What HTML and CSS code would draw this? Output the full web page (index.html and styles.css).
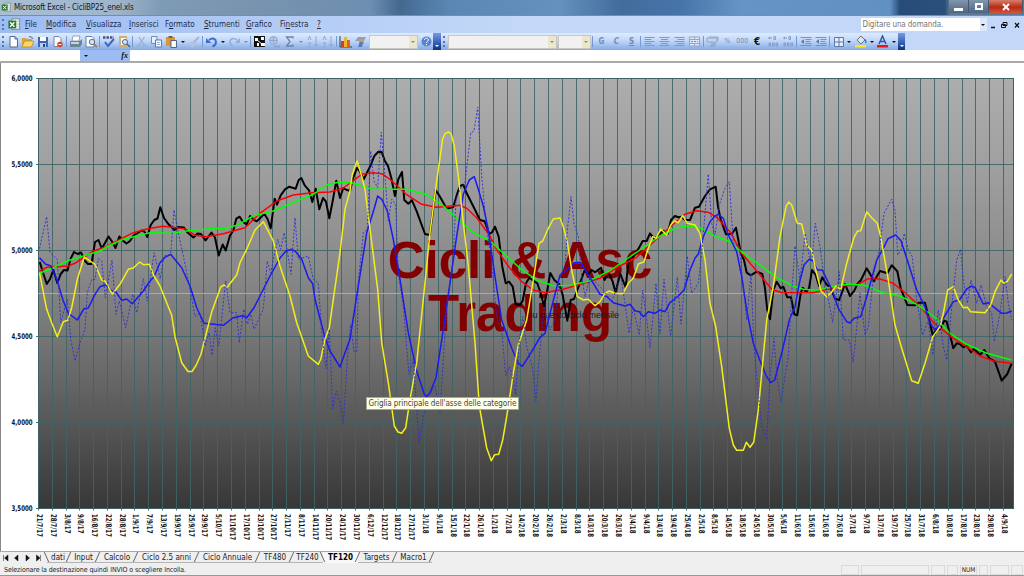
FILE: index.html
```html
<!DOCTYPE html>
<html lang="it">
<head>
    <meta charset="UTF-8">
    <meta name="viewport" content="width=device-width, initial-scale=1.0">
    <title>Microsoft Excel - CicliBP25_enel.xls</title>
    <link rel="stylesheet" href="styles.css">
</head>
<body>

    <svg class="defs">
        <symbol id="page" viewBox="0 0 15 15"><path d="M4 2.5h5l2.5 2.5v8H4z" fill="#fff" stroke="#56688c"/><path d="M9 2.5V5h2.5" fill="none" stroke="#56688c"/></symbol>
        <symbol id="open" viewBox="0 0 15 15"><path d="M2 4h4l1 1h5v8H2z" fill="#d9a63a"/><path d="M4.500 7H14l-2.500 6H2z" fill="#fbd568" stroke="#a9781e" stroke-width=".6"/><path d="M9 3c2-1 3 0 3.500 2" fill="none" stroke="#555"/></symbol>
        <symbol id="save" viewBox="0 0 15 15"><path d="M3 3h10v10H3z" fill="#4064b4"/><path d="M5 3h6v4H5z" fill="#fff"/><path d="M5 9h6v4H5z" fill="#b9cdf0"/><path d="M8 10h2v3H8z" fill="#274684"/></symbol>
        <symbol id="perm" viewBox="0 0 15 15"><path d="M4 2.500h5l2 2v8H4z" fill="#fff" stroke="#7b86a4"/><circle cx="10" cy="10.500" r="2.800" fill="#d4442a"/><path d="M8.500 10.500h3" stroke="#fff"/></symbol>
        <symbol id="print" viewBox="0 0 15 15"><path d="M5 2h7l-1 5H4z" fill="#fff" stroke="#7181a0" stroke-width=".7"/><path d="M2 7h10l2-2v5l-2 3H2z" fill="#6f819b"/><path d="M3 8h8v2H3z" fill="#c9d4e6"/><path d="M9 10h3v2H9z" fill="#55a34b"/></symbol>
        <symbol id="preview" viewBox="0 0 15 15"><path d="M3 2.500h6l2 2v8.500H3z" fill="#fff" stroke="#6b7fa8"/><circle cx="9" cy="8" r="2.700" fill="#cfe3f8" stroke="#5a6f94"/><path d="M11 10l3 3" stroke="#a87432" stroke-width="1.600"/></symbol>
        <symbol id="spell" viewBox="0 0 15 15"><path d="M2 3.500h11" stroke="#48577a" stroke-width="2.400" stroke-dasharray="2.500 1"/><path d="M4 8l3 4 6-7" fill="none" stroke="#3e64c0" stroke-width="2"/></symbol>
        <symbol id="search" viewBox="0 0 15 15"><path d="M3 2h8v11H3z" fill="#ceb176"/><path d="M5 4h5v7H5z" fill="#fff"/><circle cx="9" cy="8" r="2.500" fill="#d7e8fa" stroke="#4a628e"/><path d="M11 10l3 3" stroke="#4a628e" stroke-width="1.500"/></symbol>
        <symbol id="cut" viewBox="0 0 15 15"><path d="M5 3l5 8M10.500 3L5 11" stroke="#9aaed0" stroke-width="1.200"/><circle cx="4.500" cy="12" r="1.500" fill="none" stroke="#9aaed0"/><circle cx="10.500" cy="12" r="1.500" fill="none" stroke="#9aaed0"/></symbol>
        <symbol id="copy" viewBox="0 0 15 15"><path d="M2.500 2.500h5.500v7H2.500z" fill="#eaf1fc" stroke="#6d8dc4"/><path d="M6.500 6h6v7h-6z" fill="#fff" stroke="#5577b4"/><path d="M8 8.500h3M8 10.500h3" stroke="#8aa5d6"/></symbol>
        <symbol id="paste" viewBox="0 0 15 15"><path d="M2 3h9v9H2z" fill="#d99632"/><path d="M4.500 2h4v2h-4z" fill="#666"/><path d="M7 6.500h5.500v7H7z" fill="#fff" stroke="#51617e"/></symbol>
        <symbol id="brush" viewBox="0 0 15 15"><path d="M13 3l-5 5" stroke="#9fb3d4" stroke-width="2"/><path d="M3 9l4-2 3 3-4 4z" fill="#b3c4df"/></symbol>
        <symbol id="undo" viewBox="0 0 15 15"><path d="M5 6c4-3 7-1 7 2s-2 4-3.500 4.500" fill="none" stroke="#3f6dcc" stroke-width="2"/><path d="M2 4v5h5.500z" fill="#3f6dcc"/></symbol>
        <symbol id="redo" viewBox="0 0 15 15"><path d="M10 6C6 3 3 5 3 8s2 4 3 4.500" fill="none" stroke="#96add6" stroke-width="1.600"/><path d="M13 4v5H8z" fill="#96add6"/></symbol>
        <symbol id="zoomin" viewBox="0 0 15 15"><path d="M2 2h11v11H2z" fill="#111"/><path d="M3 4h3v3H3zM9 3h3v3H9zM5 9h2v3H5zM9 9h4v3H9z" fill="#fff"/><path d="M4 5l7 6" stroke="#fff"/></symbol>
        <symbol id="link" viewBox="0 0 15 15"><circle cx="6.500" cy="6.500" r="4" fill="#b8c9e4" stroke="#8fa5c9"/><path d="M3 6.500h7M6.500 3v7" stroke="#8fa5c9"/><path d="M7 12.500h6" stroke="#8fa5c9" stroke-width="2"/></symbol>
        <symbol id="sum" viewBox="0 0 15 15"><path d="M11 4.500V3H4.500l3.500 4.500L4.500 12H11v-1.500" fill="none" stroke="#6e83a8" stroke-width="1.300"/></symbol>
        <symbol id="sort" viewBox="0 0 15 15"><path d="M3 6l1.500-4L6 6M3 9h3l-3 4h3" fill="none" stroke="#94a9cd"/><path d="M11 2v10M9 10l2 3 2-3" fill="none" stroke="#94a9cd"/></symbol>
        <symbol id="chart" viewBox="0 0 15 15"><path d="M2 2v11h12" fill="none" stroke="#3c3c3c"/><path d="M3 7h3v6H3z" fill="#d63b28"/><path d="M6 3h3v10H6z" fill="#ecb52e"/><path d="M9 6h3v7H9z" fill="#d8651d"/></symbol>
        <symbol id="draw" viewBox="0 0 15 15"><path d="M2 7l3-4h8l-2 4z" fill="#8f9fb8"/><path d="M6 5h5v5H6z" fill="#d99848"/><path d="M5 13l2-5h3l-1 5z" fill="#5579b8"/></symbol>
        <symbol id="help" viewBox="0 0 15 15"><circle cx="7.500" cy="7.500" r="5" fill="#5684cf"/><path d="M5.500 6c0-2.500 4-2.500 4 0 0 1.300-2 1.300-2 3M7.500 10v1.300" fill="none" stroke="#fff"/></symbol>
        <symbol id="left" viewBox="0 0 15 15"><path d="M2.500 3.500h10M2.500 5.500h7M2.500 7.500h10M2.500 9.500h7M2.500 11.500h10" stroke="#7f98c2"/></symbol>
        <symbol id="center" viewBox="0 0 15 15"><path d="M2.500 3.500h10M4 5.500h7M2.500 7.500h10M4 9.500h7M2.500 11.500h10" stroke="#7f98c2"/></symbol>
        <symbol id="right" viewBox="0 0 15 15"><path d="M2.500 3.500h10M5.500 5.500h7M2.500 7.500h10M5.500 9.500h7M2.500 11.500h10" stroke="#7f98c2"/></symbol>
        <symbol id="merge" viewBox="0 0 15 15"><path d="M2.500 3h10v9h-10zM2.500 5.500h10M2.500 9.500h10M7.500 3v2.500M7.500 9.500V12" fill="#dde8f8" stroke="#90a5cb"/><path d="M4 7.500h7" stroke="#748dbb" stroke-dasharray="2 1"/></symbol>
        <symbol id="money" viewBox="0 0 15 15"><path d="M2 4h10v4H2zM4 3h9v4" fill="#c6d4ea" stroke="#8fa4c9"/><path d="M6 10h5M5 12h5" stroke="#8fa4c9" stroke-width="1.500"/></symbol>
        <symbol id="dec" viewBox="0 0 15 15"><path d="M7 4h-3M5 3L3.500 4 5 5" fill="none" stroke="#8299c2"/><path d="M9 2.500h1.500v3H9zM4 9h1.500v3H4zM7.500 9H9v3H7.500zM11 9h1.500v3H11z" fill="none" stroke="#7f97c2" stroke-width=".9"/></symbol>
        <symbol id="indent" viewBox="0 0 15 15"><path d="M2.500 3.500h11M7.500 5.500h6M7.500 7.500h5M7.500 9.500h6M2.500 11.500h11" stroke="#7790bd"/><path d="M6 5v5L3 7.500z" fill="#5b7cb9"/></symbol>
        <symbol id="grid" viewBox="0 0 15 15"><path d="M3.500 3.500h9v9h-9zM8 3.500v9M3.500 8h9" fill="#e5eefb" stroke="#5c77aa"/></symbol>
        <symbol id="fill" viewBox="0 0 15 15"><path d="M4 6l4-4 4 4-4 4z" fill="#dfe6f0" stroke="#5f6d86"/><path d="M11.500 5c1.500 1 1.500 2 1.500 4" fill="none" stroke="#486fba" stroke-width="1.500"/><path d="M2 11h11v2.500H2z" fill="#f4ec14"/></symbol>
        <symbol id="color" viewBox="0 0 15 15"><path d="M4 10l3.500-8L11 10M5.300 7.500h4.400" fill="none" stroke="#3155a6" stroke-width="1.500"/><path d="M2 11h11v2.500H2z" fill="#ec1313"/></symbol>
        <symbol id="xl" viewBox="0 0 15 15"><path d="M5 1h9v12H5z" fill="#eef3ee" stroke="#71816f"/><path d="M7 4h6M7 7h6M7 10h6" stroke="#b3c3b1"/><path d="M1 3h9v9H1z" fill="#2d7a38"/><path d="M3 5l5 5M8 5l-5 5" stroke="#fff" stroke-width="1.500"/></symbol>
    </svg>

    <div class="titlebar">
        <svg class="xl"><use href="#xl"/></svg>
        <span class="title">Microsoft Excel - CicliBP25_enel.xls</span>
        <div class="winbtns">
            <span class="win min"><i></i></span>
            <span class="win max"><i></i></span>
            <span class="win close"><svg viewBox="0 0 10 8"><path d="M2 1l6 6M8 1L2 7" stroke="#fff" stroke-width="1.900"/></svg></span>
        </div>
    </div>

    <div class="menubar">
        <i class="grip"></i>
        <svg class="xl"><use href="#xl"/></svg>
        <ul class="menu">
            <li><u>F</u>ile</li>
            <li><u>M</u>odifica</li>
            <li><u>V</u>isualizza</li>
            <li><u>I</u>nserisci</li>
            <li>F<u>o</u>rmato</li>
            <li><u>S</u>trumenti</li>
            <li><u>G</u>rafico</li>
            <li>Fi<u>n</u>estra</li>
            <li><u>?</u></li>
        </ul>
        <div class="ask">Digitare una domanda.</div>
        <i class="dd"></i>
        <svg class="docbtns" viewBox="0 0 34 10"><path d="M4 7.500h4" stroke="#111" stroke-width="1.500"/><path d="M16 2.500h4v3h-4zM14.500 4.500h4v3h-4z" fill="#c3d8f8" stroke="#111"/><path d="M28 3l4 4.500M32 3l-4 4.500" stroke="#111" stroke-width="1.300"/></svg>
    </div>

    <div class="toolbar">
        <i class="grip"></i>
        <svg><use href="#page"/></svg>
        <svg><use href="#open"/></svg>
        <svg><use href="#save"/></svg>
        <svg><use href="#perm"/></svg>
        <i class="sep"></i>
        <svg><use href="#print"/></svg>
        <svg><use href="#preview"/></svg>
        <i class="sep"></i>
        <svg><use href="#spell"/></svg>
        <svg><use href="#search"/></svg>
        <i class="sep"></i>
        <svg><use href="#cut"/></svg>
        <svg><use href="#copy"/></svg>
        <svg><use href="#paste"/></svg>
        <i class="dd"></i>
        <svg><use href="#brush"/></svg>
        <i class="sep"></i>
        <svg><use href="#undo"/></svg>
        <i class="dd"></i>
        <svg><use href="#redo"/></svg>
        <i class="dd off"></i>
        <i class="sep"></i>
        <svg><use href="#zoomin"/></svg>
        <svg><use href="#link"/></svg>
        <svg><use href="#sum"/></svg>
        <i class="dd off"></i>
        <svg><use href="#sort"/></svg>
        <svg><use href="#sort"/></svg>
        <i class="sep"></i>
        <svg><use href="#chart"/></svg>
        <svg><use href="#draw"/></svg>
        <div class="combo zoom"><i class="dd off"></i></div>
        <svg><use href="#help"/></svg>
        <i class="more"></i>
        <i class="grip second"></i>
        <div class="combo font"><i class="dd off"></i></div>
        <div class="combo size"><i class="dd off"></i></div>
        <i class="sep"></i>
        <span class="txt">G</span>
        <span class="txt italic">C</span>
        <span class="txt under">S</span>
        <i class="sep"></i>
        <svg><use href="#left"/></svg>
        <svg><use href="#center"/></svg>
        <svg><use href="#right"/></svg>
        <svg><use href="#merge"/></svg>
        <i class="sep"></i>
        <svg><use href="#money"/></svg>
        <span class="txt thin">%</span>
        <span class="txt thin">000</span>
        <span class="txt euro">€</span>
        <svg><use href="#dec"/></svg>
        <svg><use href="#dec"/></svg>
        <i class="sep"></i>
        <svg><use href="#indent"/></svg>
        <svg><use href="#indent"/></svg>
        <i class="sep"></i>
        <svg><use href="#grid"/></svg>
        <i class="dd"></i>
        <svg><use href="#fill"/></svg>
        <i class="dd"></i>
        <svg><use href="#color"/></svg>
        <i class="dd"></i>
        <i class="more"></i>
        <div class="rest"></div>
    </div>

    <div class="formulabar">
        <div class="namebox"></div>
        <div class="fxbox"><i class="dd"></i><span class="fx">fx</span></div>
        <div class="formula"></div>
    </div>

    <div class="sheet">
        <svg id="chart-area" width="1024" height="488" viewBox="0 63 1024 488">
            <defs>
                <linearGradient id="bg" x1="0" y1="0" x2="0" y2="1">
                    <stop offset="0" stop-color="#adadad"/>
                    <stop offset=".2" stop-color="#a0a0a0"/>
                    <stop offset=".42" stop-color="#8c8c8c"/>
                    <stop offset=".6" stop-color="#767676"/>
                    <stop offset=".8" stop-color="#575757"/>
                    <stop offset="1" stop-color="#373737"/>
                </linearGradient>
            </defs>
            <rect x="38.5" y="78.5" width="975" height="430" fill="url(#bg)" stroke="#555"/>
            <g id="gridlines"></g>
            <text class="watermark" x="520" y="278">Cicli &amp; Asc</text>
            <text class="watermark" x="520" y="331">Trading</text>
            <text class="note" x="528" y="317.500" textLength="91">su questo ciclo mensile</text>
            <path class="mean" d="M38 293.500H1013"/>
            <g id="series"></g>
            <g id="labels"></g>
        </svg>
        <div class="tooltip">Griglia principale dell'asse delle categorie</div>
    </div>

    <div class="tabs">
        <svg class="nav" viewBox="0 0 46 12"><path d="M3.500 3v6M8 3v6L4.500 6zM18 3v6l-3.500-3zM26 3v6l3.500-3zM36.500 3v6L40 6zM40.500 3v6" fill="#111" stroke="#111" stroke-width=".5"/></svg>
        <div class="tab t1">dati</div>
        <div class="tab t2">Input</div>
        <div class="tab t3">Calcolo</div>
        <div class="tab t4">Ciclo 2.5 anni</div>
        <div class="tab t5">Ciclo Annuale</div>
        <div class="tab t6">TF480</div>
        <div class="tab t7">TF240</div>
        <div class="tab t8 active">TF120</div>
        <div class="tab t9">Targets</div>
        <div class="tab t10">Macro1</div>
        <div class="tab last"></div>
    </div>

    <div class="status">
        <span class="msg">Selezionare la destinazione quindi INVIO o scegliere Incolla.</span>
        <span class="cell c1"></span>
        <span class="cell c2"></span>
        <span class="cell c3"></span>
        <span class="cell c4"></span>
        <span class="cell num">NUM</span>
        <span class="cell c5"></span>
        <span class="cell c6"></span>
        <span class="cell c7"></span>
    </div>

    <script src="script.js"></script>
</body>
</html>
```

FILE: styles.css
```css
*{
    margin: 0;
    padding: 0;
    box-sizing: border-box;
}

body{
    width: 1024px;
    height: 576px;
    overflow: hidden;
    display: flex;
    flex-direction: column;
    background-color: #efefef;
    font-family: "DejaVu Sans Condensed", "DejaVu Sans", sans-serif;
    font-stretch: condensed;
    font-size: 8px;
    color: #222;
}

.defs{
    position: absolute;
    width: 0;
    height: 0;
}

/* title bar */
.titlebar{
    height: 16px;
    display: flex;
    align-items: center;
    padding-left: 1px;
    border-bottom: 1px solid #7d8b9d;
    background: linear-gradient(90deg, #a9bfd4 0, #9db4ca 120px, #7f9cb6 160px, #7793ae 260px, #6e8fb2 370px, #44698f 400px, #5b87b5 450px, #6491be 560px, #426c9c 620px, #4674a8 680px, #6594c6 740px, #6191c3 890px, #264c78 900px, #2b5078 945px, #5c7896 950px);
}

.xl{
    width: 10px;
    height: 11px;
}

.title{
    margin-left: 3px;
    color: #101820;
    white-space: nowrap;
    font-size: 8px;
    letter-spacing: -.18px;
}

.winbtns{
    display: flex;
    margin-left: auto;
    align-self: flex-start;
    margin-right: 1px;
}

.win{
    width: 20px;
    height: 13px;
    display: flex;
    justify-content: center;
    align-items: center;
    border-right: 1px solid #46586d;
    background: linear-gradient(#8296ac, #4d6784);
}

.win.close{
    width: 34px;
    border-radius: 0 0 3px 0;
    background: linear-gradient(#d57e6c, #b92a15 55%, #d0543a);
}

.close svg{
    width: 10px;
    height: 8px;
}

.min i{
    width: 9px;
    height: 3px;
    margin-top: 5px;
    background-color: #fff;
}

.max i{
    width: 8px;
    height: 7px;
    border: 2px solid #fff;
}

/* menu */
.menubar{
    height: 17px;
    display: flex;
    align-items: center;
    background: linear-gradient(90deg, #9dbcf2, #c3d8f8 50%);
}

.grip{
    width: 5.5px;
    height: 11px;
    flex: none;
    border-left: 2px dotted #5876ad;
    background-clip: content-box;
    transform: translateX(2px);
}

.menubar .xl{
    width: 14px;
    height: 13px;
    margin-left: 1px;
}

.menu{
    display: flex;
    list-style: none;
    margin-left: 4.500px;
    color: #222c44;
}

.menu li{
    white-space: nowrap;
    width: 40px;
}

.menu li:nth-child(1){ width: 21px; }
.menu li:nth-child(3){ width: 43px; }
.menu li:nth-child(4){ width: 36px; }
.menu li:nth-child(5){ width: 39px; }
.menu li:nth-child(6){ width: 42px; }
.menu li:nth-child(7){ width: 34px; }
.menu li:nth-child(8){ width: 37px; }

.ask{
    margin-left: auto;
    width: 119px;
    height: 13px;
    padding-left: 2px;
    line-height: 14px;
    letter-spacing: -.1px;
    color: #777;
    background-color: #fff;
}

.menubar .dd{
    background-color: #dce8fb;
    height: 13px;
}

.docbtns{
    width: 34px;
    height: 10px;
    margin-right: 3px;
}

/* toolbar */
.toolbar{
    height: 17px;
    display: flex;
    align-items: center;
    background: linear-gradient(#dfebfd, #c0d7f9 45%, #84a9e4);
}

.toolbar svg{
    width: 14.960px;
    height: 15px;
    margin-top: -1px;
    flex: none;
}

.sep{
    width: 3px;
    height: 11px;
    flex: none;
    border-left: 1px solid #7698d0;
    transform: translateX(1px);
}

.dd{
    width: 7.500px;
    height: 11px;
    flex: none;
    display: flex;
    align-items: center;
    justify-content: center;
}

.dd::after{
    content: "";
    border: 2.500px solid transparent;
    border-top-color: #111;
    border-bottom: 0;
}

.dd.off::after{
    border-top-color: #8a8a80;
}

.combo{
    height: 14px;
    flex: none;
    display: flex;
    justify-content: flex-end;
    background-color: #f1f1f1;
    border: 1px solid #c5c8c4;
}

.combo .dd{
    height: 12px;
    background-color: #ebe7cd;
}

.combo.zoom{ width: 49px; margin: 0 1px; }
.combo.font{ width: 109px; margin-right: 1px; }
.combo.size{ width: 33px; }

.more{
    width: 7.500px;
    height: 17px;
    flex: none;
    display: flex;
    align-items: flex-end;
    justify-content: center;
    background: linear-gradient(#729be3, #2b51a4 70%, #132f72);
}

.more::after{
    content: "";
    margin-bottom: 3px;
    border: 2.500px solid transparent;
    border-top-color: #fff;
    border-bottom: 0;
}

.grip.second{
    width: 7px;
}

.txt{
    width: 15px;
    flex: none;
    text-align: center;
    margin-top: -1px;
    font-size: 8px;
    font-weight: bold;
    color: #738bb4;
}

.italic{ font-style: italic; }
.under{ text-decoration: underline; }
.thin{ font-weight: normal; font-size: 7px; }
.euro{ color: #111; font-size: 10px; }

.rest{
    flex: 1;
    height: 17px;
    background-color: #c3d8f8;
}

/* formula bar */
.formulabar{
    height: 13px;
    display: flex;
    background-color: #fff;
    border-bottom: 2px solid #aaa;
}

.namebox{
    width: 80px;
}

.fxbox{
    width: 50px;
    display: flex;
    align-items: center;
    justify-content: space-between;
    padding: 0 2px;
    background-color: #9dbcf2;
}

.fx{
    font: italic bold 8px "Liberation Serif", serif;
    color: #111;
}

/* chart sheet */
.sheet{
    position: relative;
    height: 488px;
    background-color: #fff;
    border-left: 1px solid #888;
}

#chart-area{
    display: block;
    margin-left: -1px;
}

#gridlines path{
    stroke: #3f6466;
    stroke-width: .9;
    fill: none;
}

.watermark{
    font: bold 51px "Liberation Sans", sans-serif;
    fill: #820000;
    text-anchor: middle;
}

.note{
    font: 9px "Liberation Sans", sans-serif;
    fill: #181818;
}

.mean{
    stroke: #f58a8a;
}

#series polyline{
    fill: none;
    stroke-width: 1.500;
    stroke-linejoin: round;
}

#series .price{ stroke: #000; stroke-width: 2; }
#series .red{ stroke: #f00; }
#series .green{ stroke: #0f0; }
#series .yellow{ stroke: #f2ee1c; }
#series .blue{ stroke: #1a1af0; }
#series .dashed{ stroke: #2c2cd8; stroke-width: .9; stroke-dasharray: 2 1.700; }

#labels text{
    font: bold 7.800px "DejaVu Sans Condensed", "DejaVu Sans", sans-serif;
    font-stretch: condensed;
    fill: #111;
}

.tooltip{
    position: absolute;
    left: 365px;
    top: 334px;
    width: 153px;
    height: 13px;
    line-height: 12px;
    text-align: center;
    white-space: nowrap;
    letter-spacing: -.07px;
    background-color: #fffee6;
    border: 1px solid #a5a592;
    color: #444;
}

/* sheet tabs */
.tabs{
    height: 12px;
    display: flex;
    border-top: 1px solid #aaa;
}

.nav{
    width: 46px;
    height: 12px;
    margin-right: 1px;
}

.tab{
    position: relative;
    height: 11px;
    line-height: 12px;
    text-align: center;
    white-space: nowrap;
    border-bottom: 1px solid #b5b5b5;
}

.tab::before{
    content: "";
    position: absolute;
    left: -1px;
    top: 0;
    height: 10px;
    border-left: 1px solid #666;
    transform: skewX(-24deg);
}

.t1::before, .t8::before{
    transform: skewX(24deg);
}

.t1{ width: 22px; }
.t2{ width: 29px; }
.t3{ width: 38px; }
.t4{ width: 61px; }
.t5{ width: 61px; }
.t6{ width: 34px; }
.t7{ width: 31px; }
.t8{ width: 35px; }
.t9{ width: 37px; }
.t10{ width: 37px; }
.tab.last{ border-bottom: 0; }

.tab.active{
    font-weight: bold;
    color: #000;
    border-bottom: 0;
    background-color: #f8f8f8;
}

/* status bar */
.status{
    height: 13px;
    display: flex;
    align-items: flex-end;
    border-bottom: 1px solid #9298a4;
}

.msg{
    margin-left: 4px;
    margin-right: auto;
    font-size: 7px;
    line-height: 9px;
    letter-spacing: -.1px;
    white-space: nowrap;
}

.cell{
    height: 10px;
    margin-left: 2px;
    border: 1px solid #dadada;
    font-size: 6.500px;
    line-height: 9px;
    text-align: center;
}

.c1{ width: 18px; }
.c2{ width: 68px; }
.c3{ width: 14px; }
.c4{ width: 11px; }
.num{ width: 17px; }
.c5{ width: 9px; }
.c6{ width: 19px; }
.c7{ width: 12px; margin-right: 1px; }
```

FILE: script.js
```js
const svgNS = 'http://www.w3.org/2000/svg';

const dates = `21/7/17 28/7/17 3/8/17 9/8/17 16/8/17 22/8/17 28/8/17 1/9/17 7/9/17 13/9/17 19/9/17
25/9/17 29/9/17 5/10/17 11/10/17 17/10/17 23/10/17 27/10/17 2/11/17 8/11/17 14/11/17 20/11/17
24/11/17 30/11/17 6/12/17 12/12/17 18/12/17 27/12/17 3/1/18 9/1/18 15/1/18 22/1/18 26/1/18 1/2/18
7/2/18 14/2/18 20/2/18 26/2/18 2/3/18 8/3/18 14/3/18 20/3/18 26/3/18 3/4/18 9/4/18 13/4/18 19/4/18
25/4/18 2/5/18 8/5/18 14/5/18 18/5/18 24/5/18 30/5/18 5/6/18 11/6/18 15/6/18 21/6/18 27/6/18 3/7/18
9/7/18 13/7/18 19/7/18 25/7/18 31/7/18 6/8/18 10/8/18 17/8/18 23/8/18 29/8/18 4/9/18`.split(/\s+/);

const values = ['6,0000', '5,5000', '5,0000', '4,5000', '4,0000', '3,5000'];

// x,y points of each line, drawn in this order
const series = {
    price: `39.7,262 46.7,284 50,279 53.3,270 57.3,283 60.7,274 64,270 67.5,270.5 70.5,259 74,252 77.5,254 81,252.5 85,261 88,264 91.5,264 95,242 98.5,240 101.7,248.5 105,243 108.5,236.5 112,241.5 115.5,248 119.3,236.5 122.7,240.5 126.5,243.5 130,241 133.5,235.5 137,233.5 141.5,230.5 144.3,231.5 147.3,237 150.7,225 154.3,220 157.5,218.5 160.3,207.3 164,218 168.3,224 174.5,230 178,227 184,227.5 187.5,232.5 193.5,237.5 197.5,233.5 201,234 205.5,240.5 211.5,232.5 215,237.5 218.7,255.5 222.7,244.5 225.7,250.5 230,235.5 233.3,230.5 236.3,218.7 239.7,216.7 243,222 246.7,224.3 250,216 254,220 256.7,221.3 260.7,217.7 264.3,213.7 267.7,219.3 270.7,228.3 274.7,198.7 277,204.7 280.7,195.3 285,189.3 289.3,186.7 295.7,188.7 298.7,180 301.3,178 304.7,185.3 309,190.3 312.3,202 315.7,188.7 319.3,209.3 323,198 326,201.7 329.3,218.3 332.7,201 336.3,180.7 340,198 343.3,188 346.7,190 350,190.7 353.3,177.7 357,168 360,172 363.7,179.3 367.3,172 370.7,165.3 374.3,156 378.3,151.7 381.7,152 384.7,160.7 388,166 391.3,178 395,196 398.3,179.3 402,172 404.3,200 408.3,203.7 412,200.3 416.7,211.3 425,234 429.7,235 432.7,212.7 435.7,190 440,196.7 446.7,208.7 453.3,207 457.3,193.3 460,186 463.3,184.7 466.7,193.3 474,207.7 480,220 484.7,221.3 489.3,234 492,232.3 495,226.7 498.7,236.7 502.3,266.7 505.7,283.3 509,281.7 512.7,286.7 515.7,304.3 520,305 522.7,300.7 526,283.3 529.3,277.7 533.3,280.7 537.3,283.3 540.7,293.3 544,306 547.3,290 550.3,273 554.3,280 559.3,284.3 562.7,295 564.7,306 567.3,320.7 570.7,300 574,299 577.3,290 581.7,278.3 584.7,270 588.3,274.3 591.7,270 595,272.3 601,267.7 604.5,280 608.5,272.3 612.7,281.7 615.5,292.5 620.2,273.6 625.7,287.5 629,256.7 633.3,256.7 636,252.7 639.3,247.3 642.7,241 646.7,241 650,233.3 654,238.7 658.3,236 663.3,230.7 667.7,234 671,220 675,216 678.3,217.3 681.7,216.7 685,220 690,220 695,207.7 699,206.7 705,196 710,189.3 715.7,186.7 718,206.7 720.7,219.3 726,234.3 731.7,234 736,227.7 738,238.3 740.7,252.7 744,260 746.7,272.7 750.7,275.3 756.7,271.7 762.3,274 765,288.3 767.3,310 770,319.3 773.3,290 776.7,281.7 780.7,288.3 783.3,286.7 787.3,297.3 791,297.3 794.3,314.3 797.3,315.3 800.7,293.3 802.7,287.7 806,292 809,288.3 812,270 815.7,275 819,286 822.3,277.3 826.3,284 830.7,288.3 835,298.7 839.3,300 845,284 850,296 854.3,290.7 857.3,284 861,280 866.7,268.3 870.7,275 874,281.3 880,271 887.3,273.3 891.7,265.3 897.3,271.3 900.7,288.3 904,296.7 907.3,305 915,305.3 918.3,302.7 925,302.7 929.3,320 932.7,335.3 936.7,329.3 940,329.3 944.3,320.7 946.7,321.7 950,335 953.3,348.3 956.7,343.3 960,344 963.3,347.3 966.7,345.7 971,352.3 974,348.7 980,355 984.3,350 989.3,358.3 995,361.7 1001.7,380.7 1007.3,374 1011.7,363.3`,
    red: `39.5,271 46.7,267.3 68.3,266 75,263.3 93.3,251 105,247 120,239.3 133.3,232.7 146.7,229 162.3,226.3 173.3,227.3 185.7,229 195,235.3 206.7,236.7 223.3,233.7 245,227.7 260,213.3 276.7,201 293.3,195 311.7,192.7 330,192 343.3,188 361.7,174.3 373.3,172.7 381.7,173.7 390,179.3 406.7,194.7 421.7,204.3 436.7,207.3 460,205.3 466.7,208.3 476.7,217.7 490,236 496.7,250 510,268.3 521.7,281.7 533.3,290 545,292.7 563.3,289.3 583.3,283.3 600,278.3 618,267 636.7,257.3 650,245 666.7,230 685,214.3 696.7,210.7 708.3,212.3 716.7,217.3 730,231.7 741.7,253.3 760,275 771.7,289.3 781.7,292.7 813.3,292.7 833.3,287.7 840,286 856.7,285 868.3,278.7 880,279 893.3,283.3 906.7,294 923.3,310 933.3,322.3 953.3,338.3 966.7,346.7 980,356 993.3,361 1011.7,363.3`,
    green: `39.5,273.3 53.3,267.7 70,260 86.7,255 100,251 108.3,246 123.3,239.3 150,232.7 173.3,233.3 186.7,231 210,228.7 226.7,228 236.7,225.3 253.3,216 273.3,211 296.7,201 313.3,194.3 326.7,185 338.3,182.3 351.7,182.7 373.3,189.3 406.7,189.3 426.7,194.7 443.3,206 460,221 473.3,232.7 490,241 503.3,253.3 520,268.3 536.7,280 553.3,285.7 570,285.3 590,280.7 610,270.500 640,250 660,236 676.7,227.7 688.3,225.7 700,227.7 715,236 728.3,241 743.3,253.3 760,265 776.7,277.7 793.3,286 803.3,289.3 816.7,290.3 833,286.7 846.7,284.3 863.3,285 883.3,292.7 900,296 916.7,304.3 933.3,316 950,333.3 966.7,344.3 986.7,353.3 1011.7,360`,
    blue: `39.5,257.7 45.7,264.3 50.7,265.7 56.7,279.3 63.3,301 68.3,313.3 77.3,320 84,308.7 88.3,308 95,294.3 100,286.7 105.3,284.7 111.7,290.7 116,292 121.7,300.3 126.7,299 132.3,303.7 143.3,291 149.3,282 154,276.7 160,262.7 165,257.3 170.7,254.3 181.7,267.7 190,286 196.7,307.7 204,323.3 223.3,325.3 232.7,318 242.3,315.7 246.7,317.7 254,307.7 260,296 270,276 280,258 286,251 291.7,249.3 295.7,251.7 301.7,259.3 308.3,277.7 312.7,283.7 315,299.3 325,337.7 330,351 340,367 345,352.7 350,339.3 356.7,296 366.7,232.7 374,209.3 377.7,196 381.7,199.3 387.3,211 393.3,239.3 400,279.3 408.3,332.7 416.7,371 424.3,394.3 426.7,396.7 430,392.7 436,377.7 443.3,329.3 450,282.7 456.7,236 463.3,194.3 469.3,180 474.3,176.7 478.3,189.3 483.3,206 488.3,230 495,276.7 501.7,320 511.7,348.3 518.3,363.3 522.3,366.3 531.7,351.7 540,337.3 545,333.3 551.7,306.7 560,275 566.7,270 574,262.7 580.7,262.3 588.3,275 600,294.3 607,296.7 613.3,302.7 625,306 630,304.3 635,310.7 639.3,311.7 643.3,316.7 648.3,311.7 655,313.3 660,310 665,311.7 670,302.7 678.3,296 684,290 690,270 695,258.3 698.3,254 703.3,236.7 710,221.7 715,216 718.3,214.3 723.3,218.3 728.3,235 736.7,251.7 741.7,276.7 746.7,310 753.3,343.3 761.7,365 766.7,376.7 770.7,382.7 774.7,380 781.7,353.3 789.3,320 795,306.7 799.3,283.3 804,265 809.3,259.3 812.7,260.7 817.3,270 822.3,270 831.7,289.3 838.3,308.3 846.7,321.7 850,323 854,318.3 860.7,316.7 866.7,296.7 876.7,260 883.3,248.3 888,238.7 895.7,235 901,240.7 908.3,263.3 916.7,290 925,306.7 929.3,321.7 934.3,329.3 938.3,327.7 943.3,318.3 953.3,301.7 959.3,300 966.7,289 971,286.3 975,287.3 983.3,304 988.3,302.7 1001.7,313.3 1006.7,313 1011.7,311`,
    yellow: `39.5,272.7 46.7,309.3 51.7,322.7 57.3,336.7 63.3,321.7 67.7,320.3 71.7,307.7 77.3,279.3 84.3,257 95,264.3 101.7,280 105,281 112.3,294 120,284.3 128.3,269.3 133.3,268 139.7,262 143.3,264.7 149.3,264.3 154,276 160,286 171.7,315.3 175,336.7 181.7,362.7 188,371.5 192,371.5 196,365.5 201,354.3 206,334.3 211.7,312 220.7,287 224,285 227.3,287 236.7,275 240,262.7 246.7,249.3 255,230 263.3,221.7 273.3,241 280,266 290,296 296.7,322.7 308.3,356 318.3,364.3 320.7,359.3 325,339.3 329.3,327.7 333.3,299.3 340,252.7 345,209.3 350,191 352.3,174.3 357,161 361.7,176 365,189.3 371.7,242.7 377.7,289.3 381.7,342.7 388.3,382.7 394.3,426 398,432 401.7,433.3 405.7,427.7 410,399.3 416.7,362.7 423.3,299.3 430,232.7 436.7,181 442.7,138.7 445,133.7 448.3,132 451,133.7 454.3,146 458.3,176 463.3,222.7 468.3,266 475,342.7 479.3,406 486.7,448 491.3,460.7 494.7,454.7 498.7,454.3 502.7,440 506.7,416.7 513.3,373.3 518.3,345 526.7,320 533.3,280 539,243.3 542.7,241 548.3,228.3 553.3,219 560,218 563.3,226.7 567.3,241.7 571.7,270 577.3,296.7 583.3,300 588.3,299.3 595,305.7 600,301.7 605,293.3 609.3,291 615,293.3 622.7,293.8 628.3,283.3 633.3,278.3 638.3,264 644,261.7 648.3,248.3 652.7,236.7 656,238.3 660.7,229 666.7,235 670.7,225 674,221 678.3,222.7 682.7,215.7 687.3,223.3 695,225 700,233.3 705,260 710,303.3 715.7,326.7 721.7,366.7 729.3,428.3 733.3,445 736.7,450.3 743.3,450.3 746.3,442.3 750,447.3 753.7,442.3 758.3,410 761.7,373.3 766.7,320 773.3,286.7 780,236.7 786,206.7 788.7,202 791.7,205 797.3,223.3 801.7,224 806.7,245 811.7,250 815,266.7 821,291 826.7,296.7 830.7,293.3 836,286 840.7,289.3 846.7,263.3 854,237.3 857.3,231.3 860.7,230.7 866.7,211.7 871.7,217.7 877.3,223.3 880.7,236.7 888.3,280 895,325 901.7,348.3 911.7,380.7 918.3,383.3 925,363.3 932.7,336.7 940,326.7 943.3,313.3 947.7,290 953.3,286.7 958.3,300 963.3,307.7 967.3,307.3 970.7,311.7 985,312.7 990.7,305 995,291.7 1001,280 1004,283.3 1007.3,281.3 1011.7,274`,
    dashed: `39.5,248.7 46.7,216.7 50,252.7 57.3,259.3 60.7,322.7 67.3,299.3 70.7,339.3 75,361 80,342.7 85,329.3 87.3,292.7 91.7,279.3 95,279.3 98.3,258.7 101.7,261 105.3,297.7 112,260 116,314.3 119.3,301 125.7,327.7 132.7,294.3 136.7,312.7 143.3,278.7 147.3,301 154,252.7 160.3,278.7 164,256 170.7,254.3 174,210 178.3,232.7 184,259.3 190.7,292.7 195,316.7 200,312.7 205,346 209,332.7 212,355.3 215.3,327.7 218.7,346 225.7,281 230,312.7 236.7,312.7 239.3,342.7 243.7,309.3 247.500,324.3 250.7,314.3 254,329.3 263.3,309.3 267.3,261 270.7,272.7 277.7,239.3 280.7,249.3 284.3,232.7 291,274.3 295,217.7 298.3,259.3 308.3,256 313.3,279.3 318.3,282.7 321.7,332.7 326,368.7 329.3,329.3 332.7,408.7 336.3,391 340,402.7 343.3,423.3 347.3,359.3 350.7,324.3 354,351.7 357,351 358.3,282.7 363.3,232.7 367.3,229.3 370.7,151 374,181 377.7,187.7 381.3,132 385,176 388.3,221 391.7,199.3 395.7,204.3 398.3,272.7 403.3,306 409,374.3 413.3,359.3 419,442.7 426.7,399.3 435,386 440,412 446.7,306 452.7,266 456,199.3 460,189.3 465,182.7 470.7,132.7 474,131 477.7,107 481.7,176 486,222.7 491.7,263.3 496.7,316.7 501.7,330 505.7,375.7 509.3,366.7 512.7,376.7 515.7,395 519,343.3 522.7,316.7 526.7,346.7 532.3,366.7 536,400.7 539.3,356.7 544,306.7 550,330 555,320 559.3,276.7 565,266.7 567.3,230 571,196.7 574,223.3 578.3,236.7 581.7,276.7 585,296.7 590,276.7 596.7,283.3 603.3,290 611.7,301.7 620.7,276.7 625,303.3 629,333.3 633.3,308.3 639.3,335 642.7,290 646.7,320 650,348.3 656,283.3 660,334 664,279.3 670.7,336 677.3,277.3 681,324 687.3,256 691.7,293.3 698.3,283.3 701.7,253.3 708.3,174 711.7,223.3 715,235 719.3,205 725,188.3 729.3,181.7 733.3,243.3 739.3,246.7 743.3,286.7 746.7,320 751,273.3 754,346.7 758.3,393.3 761.7,426.7 766.7,439.3 770,376.7 774,338.3 777.3,380 781,401.7 785,376.7 788.3,356.7 791.7,293.3 795,246 800,280 805.3,233.3 809.3,256.7 812,260 815.3,223.3 820,246.7 824,276.7 832.7,322.3 839.3,271.7 843.3,340 849.3,340 853.3,362.3 860,293.3 865,335 868.3,326.7 873.3,276.7 879.3,250 884,213.3 891.7,199.3 895,210 897.7,255 901,250 904.3,233.3 908.3,250 912.3,256.7 916.7,300 922.7,335 928.3,320 932.7,355 938.3,310 943.3,346.7 946.7,360 951.7,306.7 956.7,260 960.7,249.3 963.3,280 967.3,303.3 971,280 976.7,303.3 981,285 986.7,306.7 991.7,313.3 994.3,341.7 1000,313.3 1005,276.7 1008.3,303.3 1011.7,320`
};

const add = (parent, tag, attrs, text) => {
    const el = document.createElementNS(svgNS, tag);
    for (const key in attrs) el.setAttribute(key, attrs[key]);
    if (text) el.textContent = text;
    document.querySelector(parent).appendChild(el);
};

dates.forEach((date, i) => {
    const x = Math.floor(38.5 + i * 13.785) + 0.5;
    add('#gridlines', 'path', { d: `M${x} 78V510.5` });
    add('#labels', 'text', {
        transform: `translate(${x - 1.5} 514) rotate(90)`,
        textLength: date.length * 3.35 - 0.5,
        lengthAdjust: 'spacingAndGlyphs'
    }, date);
});

values.forEach((value, i) => {
    const y = Math.round(78 + i * 86) + 0.5;
    add('#gridlines', 'path', { d: `M36 ${y}H1013` });
    add('#labels', 'text', { x: 11.5, y: y + 2.5, textLength: 21, lengthAdjust: 'spacingAndGlyphs' }, value);
});

for (const name in series) {
    add('#series', 'polyline', { class: name, points: series[name] });
}
```
